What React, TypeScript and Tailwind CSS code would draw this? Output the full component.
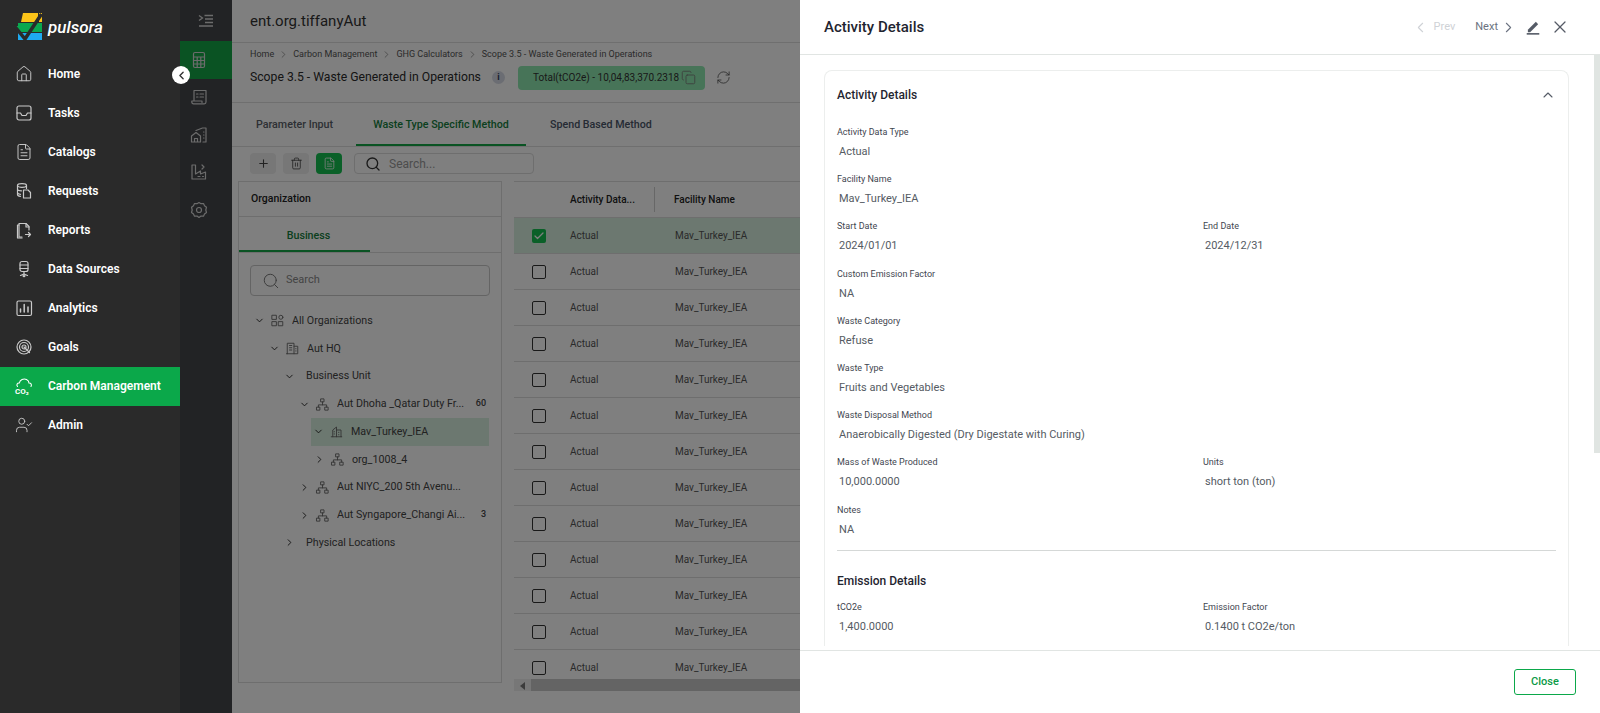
import type { ReactNode } from 'react'
import { House, FileText, UserCheck, ChevronDown, ChevronRight, ChevronLeft, ChevronUp, Search, Plus, Trash2, X, Copy, RefreshCw, Check } from 'lucide-react'

const font = { fontFamily: 'Roboto, "Liberation Sans", sans-serif' }

function Ico({ children, size = 20, className = '' }: { children: ReactNode; size?: number; className?: string }) {
  return (
    <svg width={size} height={size} viewBox="0 0 20 20" fill="none" stroke="currentColor" strokeWidth="1.2" strokeLinecap="round" strokeLinejoin="round" className={className}>
      {children}
    </svg>
  )
}

const navItems: { label: string; icon: ReactNode; active?: boolean }[] = [
  { label: 'Home', icon: <House size={18} strokeWidth={1.3} /> },
  {
    label: 'Tasks',
    icon: (
      <Ico>
        <rect x="3" y="3" width="14" height="14" rx="2" />
        <path d="M3 10h3.5l1.5 2.5h4l1.5-2.5H17" />
      </Ico>
    ),
  },
  { label: 'Catalogs', icon: <FileText size={18} strokeWidth={1.3} /> },
  {
    label: 'Requests',
    icon: (
      <Ico>
        <ellipse cx="8" cy="4.5" rx="4.5" ry="1.8" />
        <path d="M3.5 4.5v9c0 1 1.2 1.7 3 1.8M3.5 8c0 1 1.5 1.8 4 1.8M3.5 11.5c0 1 1 1.6 3 1.8M12.5 4.5v3" />
        <path d="M9.5 9h4.5l2.5 2.5V17h-7z" />
      </Ico>
    ),
  },
  {
    label: 'Reports',
    icon: (
      <Ico>
        <path d="M8 17H5V3.5h7l3 3V10" />
        <path d="M5 5H3.5v13H8M12 3.5V7h3" />
        <path d="M11.5 14.5h5M14.5 12.5l2 2-2 2" />
      </Ico>
    ),
  },
  {
    label: 'Data Sources',
    icon: (
      <Ico>
        <rect x="6" y="2.5" width="8" height="10" rx="2" />
        <path d="M6 6h8M6 9.5h8M10 12.5V15M6.5 16.5L10 15l3.5 1.5" />
        <circle cx="10" cy="16.8" r="0.9" />
      </Ico>
    ),
  },
  {
    label: 'Analytics',
    icon: (
      <Ico>
        <rect x="3" y="3" width="14.5" height="14.5" rx="1.5" />
        <path d="M6.5 14v-3M10.2 14V6.5M14 14V9" strokeWidth="1.5" />
      </Ico>
    ),
  },
  {
    label: 'Goals',
    icon: (
      <Ico>
        <circle cx="10" cy="10" r="7" />
        <circle cx="10" cy="10" r="4.5" />
        <circle cx="10" cy="10" r="2" />
        <path d="M10 10l5.5 5.5" />
      </Ico>
    ),
  },
  {
    label: 'Carbon Management',
    active: true,
    icon: (
      <svg width="20" height="20" viewBox="0 0 20 20" fill="none" stroke="currentColor" strokeWidth="1.1">
        <path d="M3.5 10.5C2 8.5 3.5 6.8 5.3 7 6 4 9.5 2 12.5 3.5c2 1 2.5 2.3 2.5 3.5 2-.2 3 2 2 3.5" strokeLinecap="round" />
        <text x="1" y="18" fontSize="8" fontWeight="700" fill="currentColor" stroke="none" style={font}>CO₂</text>
      </svg>
    ),
  },
  { label: 'Admin', icon: <UserCheck size={18} strokeWidth={1.2} /> },
]

const railIcons: ReactNode[] = [
  <Ico key="a">
    <rect x="4.5" y="2.5" width="11" height="15" rx="1.5" />
    <path d="M4.5 7h11M4.5 10.5h11M4.5 14h11M8.2 7v10.5M11.8 7v10.5" />
  </Ico>,
  <Ico key="b">
    <path d="M5 14V3.5h12V15c0 1-.8 1.8-1.8 1.8H4.5C3.5 16.8 2.8 16 2.8 15v-1H13v1.5" />
    <path d="M7.5 7H9M7.5 10H9M11 7h3.5M11 10h3.5" />
  </Ico>,
  <Ico key="c">
    <path d="M2.5 17v-6L7 7.500l4.500 3.500v6zM5.500 17v-3.500h3V17" />
    <path d="M7 5.500L13.500 3H17v14h-3M14.500 7H15M14.500 10H15M14.500 13H15" />
  </Ico>,
  <Ico key="d">
    <path d="M3 17V3h3.500v9l5-3v3l5-2v7zM9 14.500h2M13.500 14.500h1" />
    <path d="M13 3l2 2-2 2" />
  </Ico>,
  <Ico key="e">
    <path d="M10 2.5l2 1.2 2.5-.2 1 2.2 2 1.5-.7 2.8.7 2.5-2 1.5-1 2.2-2.5-.2-2 1.5-2-1.5-2.5.2-1-2.2-2-1.5.7-2.5-.7-2.8 2-1.5 1-2.2 2.5.2z" />
    <circle cx="10" cy="10" r="2.5" />
  </Ico>,
]

const orgIcon = (
  <Ico size={15}>
    <rect x="8" y="2.5" width="4" height="4" />
    <rect x="2.5" y="13.5" width="4" height="4" />
    <rect x="13.5" y="13.5" width="4" height="4" />
    <path d="M10 6.5v4M4.5 13.5v-3h11v3" />
  </Ico>
)

const treeRows: { label: string; pad: string; open?: boolean; icon?: ReactNode; count?: string; active?: boolean }[] = [
  {
    label: 'All Organizations',
    pad: 'pl-[12px]',
    open: true,
    icon: (
      <Ico size={15}>
        <rect x="3" y="3" width="5.5" height="5.5" />
        <circle cx="14.5" cy="5.7" r="2.7" />
        <rect x="3" y="11.5" width="5.5" height="5.5" />
        <rect x="11.5" y="11.5" width="5.5" height="5.5" />
      </Ico>
    ),
  },
  {
    label: 'Aut HQ',
    pad: 'pl-[27px]',
    open: true,
    icon: (
      <Ico size={15}>
        <path d="M3 17V3h9v14M12 7h5v10H2M6 6h3M6 9h3M6 12h3M14.5 10v.5M14.5 13v.5" />
      </Ico>
    ),
  },
  { label: 'Business Unit', pad: 'pl-[42px]', open: true },
  { label: 'Aut Dhoha _Qatar Duty Fr...', pad: 'pl-[57px]', open: true, icon: orgIcon, count: '60' },
  {
    label: 'Mav_Turkey_IEA',
    pad: 'pl-[72px]',
    open: true,
    active: true,
    icon: (
      <Ico size={15}>
        <path d="M3 17h14M5 17V8l5-4v13M10 8h6v9M7 10v.5M7 13v.5M13 11v.5M13 14v.5" />
      </Ico>
    ),
  },
  { label: 'org_1008_4', pad: 'pl-[72px]', icon: orgIcon },
  { label: 'Aut NIYC_200 5th Avenu...', pad: 'pl-[57px]', icon: orgIcon },
  { label: 'Aut Syngapore_Changi Ai...', pad: 'pl-[57px]', icon: orgIcon, count: '3' },
  { label: 'Physical Locations', pad: 'pl-[42px]' },
]

const activityFields: [string, string, string?, string?][] = [
  ['Activity Data Type', 'Actual'],
  ['Facility Name', 'Mav_Turkey_IEA'],
  ['Start Date', '2024/01/01', 'End Date', '2024/12/31'],
  ['Custom Emission Factor', 'NA'],
  ['Waste Category', 'Refuse'],
  ['Waste Type', 'Fruits and Vegetables'],
  ['Waste Disposal Method', 'Anaerobically Digested (Dry Digestate with Curing)'],
  ['Mass of Waste Produced', '10,000.0000', 'Units', 'short ton (ton)'],
  ['Notes', 'NA'],
]

function Field({ label, value }: { label: string; value: string }) {
  return (
    <div className="w-[366px] shrink-0">
      <div className="h-[17px] text-[9px] leading-[16px] text-[#3f4650]">{label}</div>
      <div className="mt-px h-5 pl-0.5 text-[11px] leading-5 text-[#555b63]">{value}</div>
    </div>
  )
}

function FieldRow({ row }: { row: [string, string, string?, string?] }) {
  return (
    <div className="flex h-[47.2px]">
      <Field label={row[0]} value={row[1]} />
      {row[2] && <Field label={row[2]} value={row[3] ?? ''} />}
    </div>
  )
}

export default function App() {
  return (
    <div className="relative flex h-[713px] w-full overflow-hidden bg-white" style={font}>
      {/* 왼쪽 메뉴 */}
      <aside className="relative z-20 flex w-[180px] shrink-0 flex-col bg-[#2a2a2a]">
        <div className="flex h-[55px] items-start pl-[14px] pt-[13px]">
          <svg width="28" height="28" viewBox="0 0 28 28">
            <path d="M9 0h15v9H7z" fill="#fcc419" />
            <path d="M25 0h3v9h-3z" fill="#fcc419" />
            <path d="M4 10h24v9H4z" fill="#0aa84f" />
            <path d="M0 13h4v4z" fill="#0aa84f" />
            <path d="M4 20h24v7H4z" fill="#1eaaf1" />
            <path d="M0 12.5L11 26 27.5 1" fill="none" stroke="#2a2a2a" strokeWidth="3.5" />
          </svg>
          <span className="ml-[6px] mt-[2px] text-[17px] font-medium italic leading-6 text-white">pulsora</span>
        </div>
        {navItems.map(item => (
          <div key={item.label} className={`flex h-[39px] items-center pb-px text-xs font-semibold text-white ${item.active ? 'bg-[#0ba84a]' : ''}`}>
            <span className={`flex w-[48px] justify-center ${item.active ? 'text-white' : 'text-[#c9c9c9]'}`}>{item.icon}</span>
            {item.label}
          </div>
        ))}
      </aside>

      {/* 접기 버튼 */}
      <button className="absolute left-[172px] top-[66px] z-30 flex h-[18px] w-[18px] items-center justify-center rounded-full bg-white text-[#333]">
        <ChevronLeft size={13} strokeWidth={2.5} />
      </button>

      {/* 아이콘 레일 */}
      <nav className="flex w-[52px] shrink-0 flex-col bg-[#44464a] text-[#d8d8d8]">
        <div className="flex h-[41px] items-center justify-center">
          <svg width="16" height="14" viewBox="0 0 16 14" fill="none" stroke="currentColor" strokeWidth="1.3">
            <path d="M1 1.5L4.5 4 1 6.5M6.5 1.5H15M7 5h8M7 8.5h8M1 12h14" />
          </svg>
        </div>
        {railIcons.map((icon, i) => (
          <div key={i} className={`flex h-[37.5px] items-center justify-center pr-[14px] ${i === 0 ? 'bg-[#14a646]' : ''}`}>
            {icon}
          </div>
        ))}
      </nav>

      {/* 메인 영역 */}
      <main className="flex min-w-0 flex-1 flex-col text-[#333]">
        <div className="flex h-[43px] shrink-0 items-center border-b border-[#dfdfdf] pl-[18px] text-[15px] text-[#333]">ent.org.tiffanyAut</div>
        <div className="h-[60px] shrink-0 border-b border-[#dfdfdf] pl-[18px]">
          <div className="flex h-[22px] items-center gap-[4px] text-[9px] leading-none text-[#555]">
            <span>Home</span>
            <ChevronRight size={11} strokeWidth={1.2} />
            <span>Carbon Management</span>
            <ChevronRight size={11} strokeWidth={1.2} />
            <span>GHG Calculators</span>
            <ChevronRight size={11} strokeWidth={1.2} />
            <span>Scope 3.5 - Waste Generated in Operations</span>
          </div>
          <div className="flex h-[25px] items-center">
            <span className="w-[242px] whitespace-nowrap text-[12.2px] text-[#2a2a2a]">Scope 3.5 - Waste Generated in Operations</span>
            <span className="flex h-[13px] w-[13px] items-center justify-center rounded-full bg-[#d7dbe6] text-[9px] font-bold text-[#2e3a5c]">i</span>
            <div className="ml-[13px] flex h-[24px] w-[187px] items-center whitespace-nowrap rounded bg-[#8fe8b0] pl-[15px] pr-[9px] text-[10px] text-[#333]">
              Total(tCO2e) - 10,04,83,370.2318
              <Copy size={15} strokeWidth={1.3} className="ml-auto text-[#777]" />
            </div>
            <RefreshCw size={15} strokeWidth={1.2} className="ml-[11px] text-[#444]" />
          </div>
        </div>
        <div className="flex h-[44px] shrink-0 border-b border-[#dfdfdf] text-[10.7px] font-medium">
          <div className="flex w-[124px] items-center pl-[24px] pt-[2px] text-[#5a6068]">Parameter Input</div>
          <div className="flex w-[170px] items-center justify-center border-b-2 border-[#14a646] pt-[4px] text-[#14803d]">Waste Type Specific Method</div>
          <div className="flex items-center pl-[24px] pt-[2px] text-[#4a5568]">Spend Based Method</div>
        </div>
        <div className="flex h-[34px] shrink-0 items-start gap-[7px] pl-[18px] pt-[6px]">
          <button className="flex h-[21px] w-[26px] items-center justify-center rounded bg-[#eeeeee] text-[#444]"><Plus size={13} /></button>
          <button className="flex h-[21px] w-[26px] items-center justify-center rounded bg-[#eeeeee] text-[#444]"><Trash2 size={13} strokeWidth={1.5} /></button>
          <button className="flex h-[21px] w-[26px] items-center justify-center rounded bg-[#14c050] text-white"><FileText size={13} strokeWidth={1.5} /></button>
          <div className="ml-[5px] flex h-[21px] w-[180px] items-center rounded border border-[#dcdcdc] pl-[10px] text-xs text-[#999]">
            <Search size={16} strokeWidth={2} className="mr-[8px] text-[#333]" />
            Search...
          </div>
        </div>
        <div className="flex min-h-0 flex-1 gap-[12px] pl-[6px]">
          {/* 조직 트리 */}
          <section className="h-[502px] w-[264px] shrink-0 border border-[#dcdcdc]">
            <div className="flex h-[35px] items-center border-b border-[#dcdcdc] pl-[12px] text-[10.5px] font-medium text-[#222]">Organization</div>
            <div className="flex h-[36px] border-b border-[#dcdcdc]">
              <div className="flex w-[131px] items-center justify-center border-b-2 border-[#14a646] pl-[8px] pt-[6px] text-[10.7px] font-medium text-[#14803d]">Business</div>
            </div>
            <div className="mx-[11px] mt-3 flex h-[31px] items-center rounded border border-[#c8c8c8] pl-[11px] text-[11px] text-[#888]">
              <Search size={18} strokeWidth={1.3} className="mr-[6px] text-[#777]" />
              Search
            </div>
            <div className="mt-[11px]">
              {treeRows.map(row => (
                <div key={row.label} className={`ml-px flex h-[27.75px] items-center ${row.pad}`}>
                  <div className={`flex h-full min-w-0 flex-1 items-center ${row.active ? 'mr-[12px] -ml-[1px] bg-[#d8f0e0]' : 'mr-[6px]'}`}>
                    <span className="flex w-[14px] shrink-0 justify-center text-[#222]">
                      {row.open ? <ChevronDown size={11} strokeWidth={2} /> : <ChevronRight size={11} strokeWidth={2} />}
                    </span>
                    {row.icon ? <span className="ml-[4px] mr-[7px] shrink-0 text-[#666]">{row.icon}</span> : <span className="w-[10px]" />}
                    <span className="flex-1 truncate text-[10.7px] text-[#444]">{row.label}</span>
                    {row.count && <span className="ml-1 mr-[9px] text-[9px] font-medium text-[#444]">{row.count}</span>}
                  </div>
                </div>
              ))}
            </div>
          </section>
          {/* 활동 테이블 */}
          <section className="h-[510px] min-w-0 flex-1 overflow-hidden border-t border-[#dcdcdc]">
            <div className="h-[497px] overflow-hidden">
              <div className="flex h-[36px] items-center border-b border-[#dcdcdc] text-[10px] font-medium text-[#222]">
                <span className="w-[141px] border-r border-[#cfcfcf] pl-[56px] leading-[25px]">Activity Data...</span>
                <span className="pl-[19px]">Facility Name</span>
              </div>
              {Array.from({ length: 13 }, (_, i) => (
                <div key={i} className={`flex h-[36px] shrink-0 items-center border-b border-[#dcdcdc] text-[10px] text-[#555] ${i === 0 ? 'bg-[#d8f0e0]' : ''}`}>
                  <span className="flex w-[56px] justify-start pl-[18px]">
                    {i === 0 ? (
                      <span className="flex h-[14px] w-[14px] items-center justify-center rounded-[2px] bg-[#14c050] text-white"><Check size={12} strokeWidth={2.5} /></span>
                    ) : (
                      <span className="h-[14px] w-[14px] rounded-[2px] border-[1.5px] border-[#333]" />
                    )}
                  </span>
                  <span className="w-[105px]">Actual</span>
                  <span>Mav_Turkey_IEA</span>
                </div>
              ))}
            </div>
            <div className="flex h-[13px] bg-[#eeeeee]">
              <span className="flex w-[17px] items-center justify-center">
                <span className="h-0 w-0 border-y-[4px] border-r-[5px] border-y-transparent border-r-[#777]" />
              </span>
              <span className="flex-1 bg-[#c8c8c8]" />
            </div>
          </section>
        </div>
      </main>

      <div className="absolute inset-y-0 left-[180px] right-0 z-10 bg-black/50" />

      {/* 상세 패널 */}
      <aside className="absolute inset-y-0 right-0 z-20 flex w-[800px] flex-col bg-white">
        <header className="flex h-[55px] shrink-0 items-center border-b border-[#e1e5e3] pl-[24px]">
          <h1 className="text-[15px] font-medium text-[#1f2530]">Activity Details</h1>
          <div className="ml-auto flex items-center pr-[30px] text-[11px]">
            <ChevronLeft size={17} strokeWidth={1.5} className="text-[#cfd2d6]" />
            <span className="ml-[5px] text-[#cfd2d6]">Prev</span>
            <span className="ml-[20px] text-[#6b7280]">Next</span>
            <ChevronRight size={17} strokeWidth={1.5} className="ml-[2px] text-[#6b7280]" />
            <svg width="16" height="16" viewBox="0 0 14 14" fill="none" className="ml-[8px] text-[#555b66]">
              <path d="M2.5 9.5l7-7 2 2-7 7h-2z" fill="currentColor" />
              <path d="M1.5 13h11" stroke="currentColor" strokeWidth="1.4" />
            </svg>
            <X size={20} strokeWidth={1.5} className="ml-[9px] text-[#555b66]" />
          </div>
        </header>
        <div className="relative min-h-0 flex-1 overflow-hidden pl-[24px] pr-[31px] pt-[15px]">
          <div className="rounded-t-[8px] border border-b-0 border-[#eceeed] px-3 pt-[11px]">
            <div className="flex h-[25px] items-center justify-between">
              <h2 className="text-xs font-medium text-[#1f2530]">Activity Details</h2>
              <ChevronUp size={16} strokeWidth={1.6} className="text-[#555b66]" />
            </div>
            <div className="mt-[17px]">
              {activityFields.map(row => (
                <FieldRow key={row[0]} row={row} />
              ))}
            </div>
            <div className="mt-px border-t border-[#d5d8d7]" />
            <h2 className="mt-[20px] h-5 text-xs font-medium leading-5 text-[#1f2530]">Emission Details</h2>
            <div className="mt-[8px]">
              <FieldRow row={['tCO2e', '1,400.0000', 'Emission Factor', '0.1400 t CO2e/ton']} />
            </div>
          </div>
          <div className="absolute right-0 top-0 h-[398px] w-[6px] bg-[#e0e5e2]" />
        </div>
        <footer className="flex h-[63px] shrink-0 items-center justify-end border-t border-[#e1e5e3] pr-[24px]">
          <button className="h-[26px] w-[62px] rounded-[3px] border border-[#0ba84a] text-[11px] font-medium text-[#0b9a45]">Close</button>
        </footer>
      </aside>
    </div>
  )
}
